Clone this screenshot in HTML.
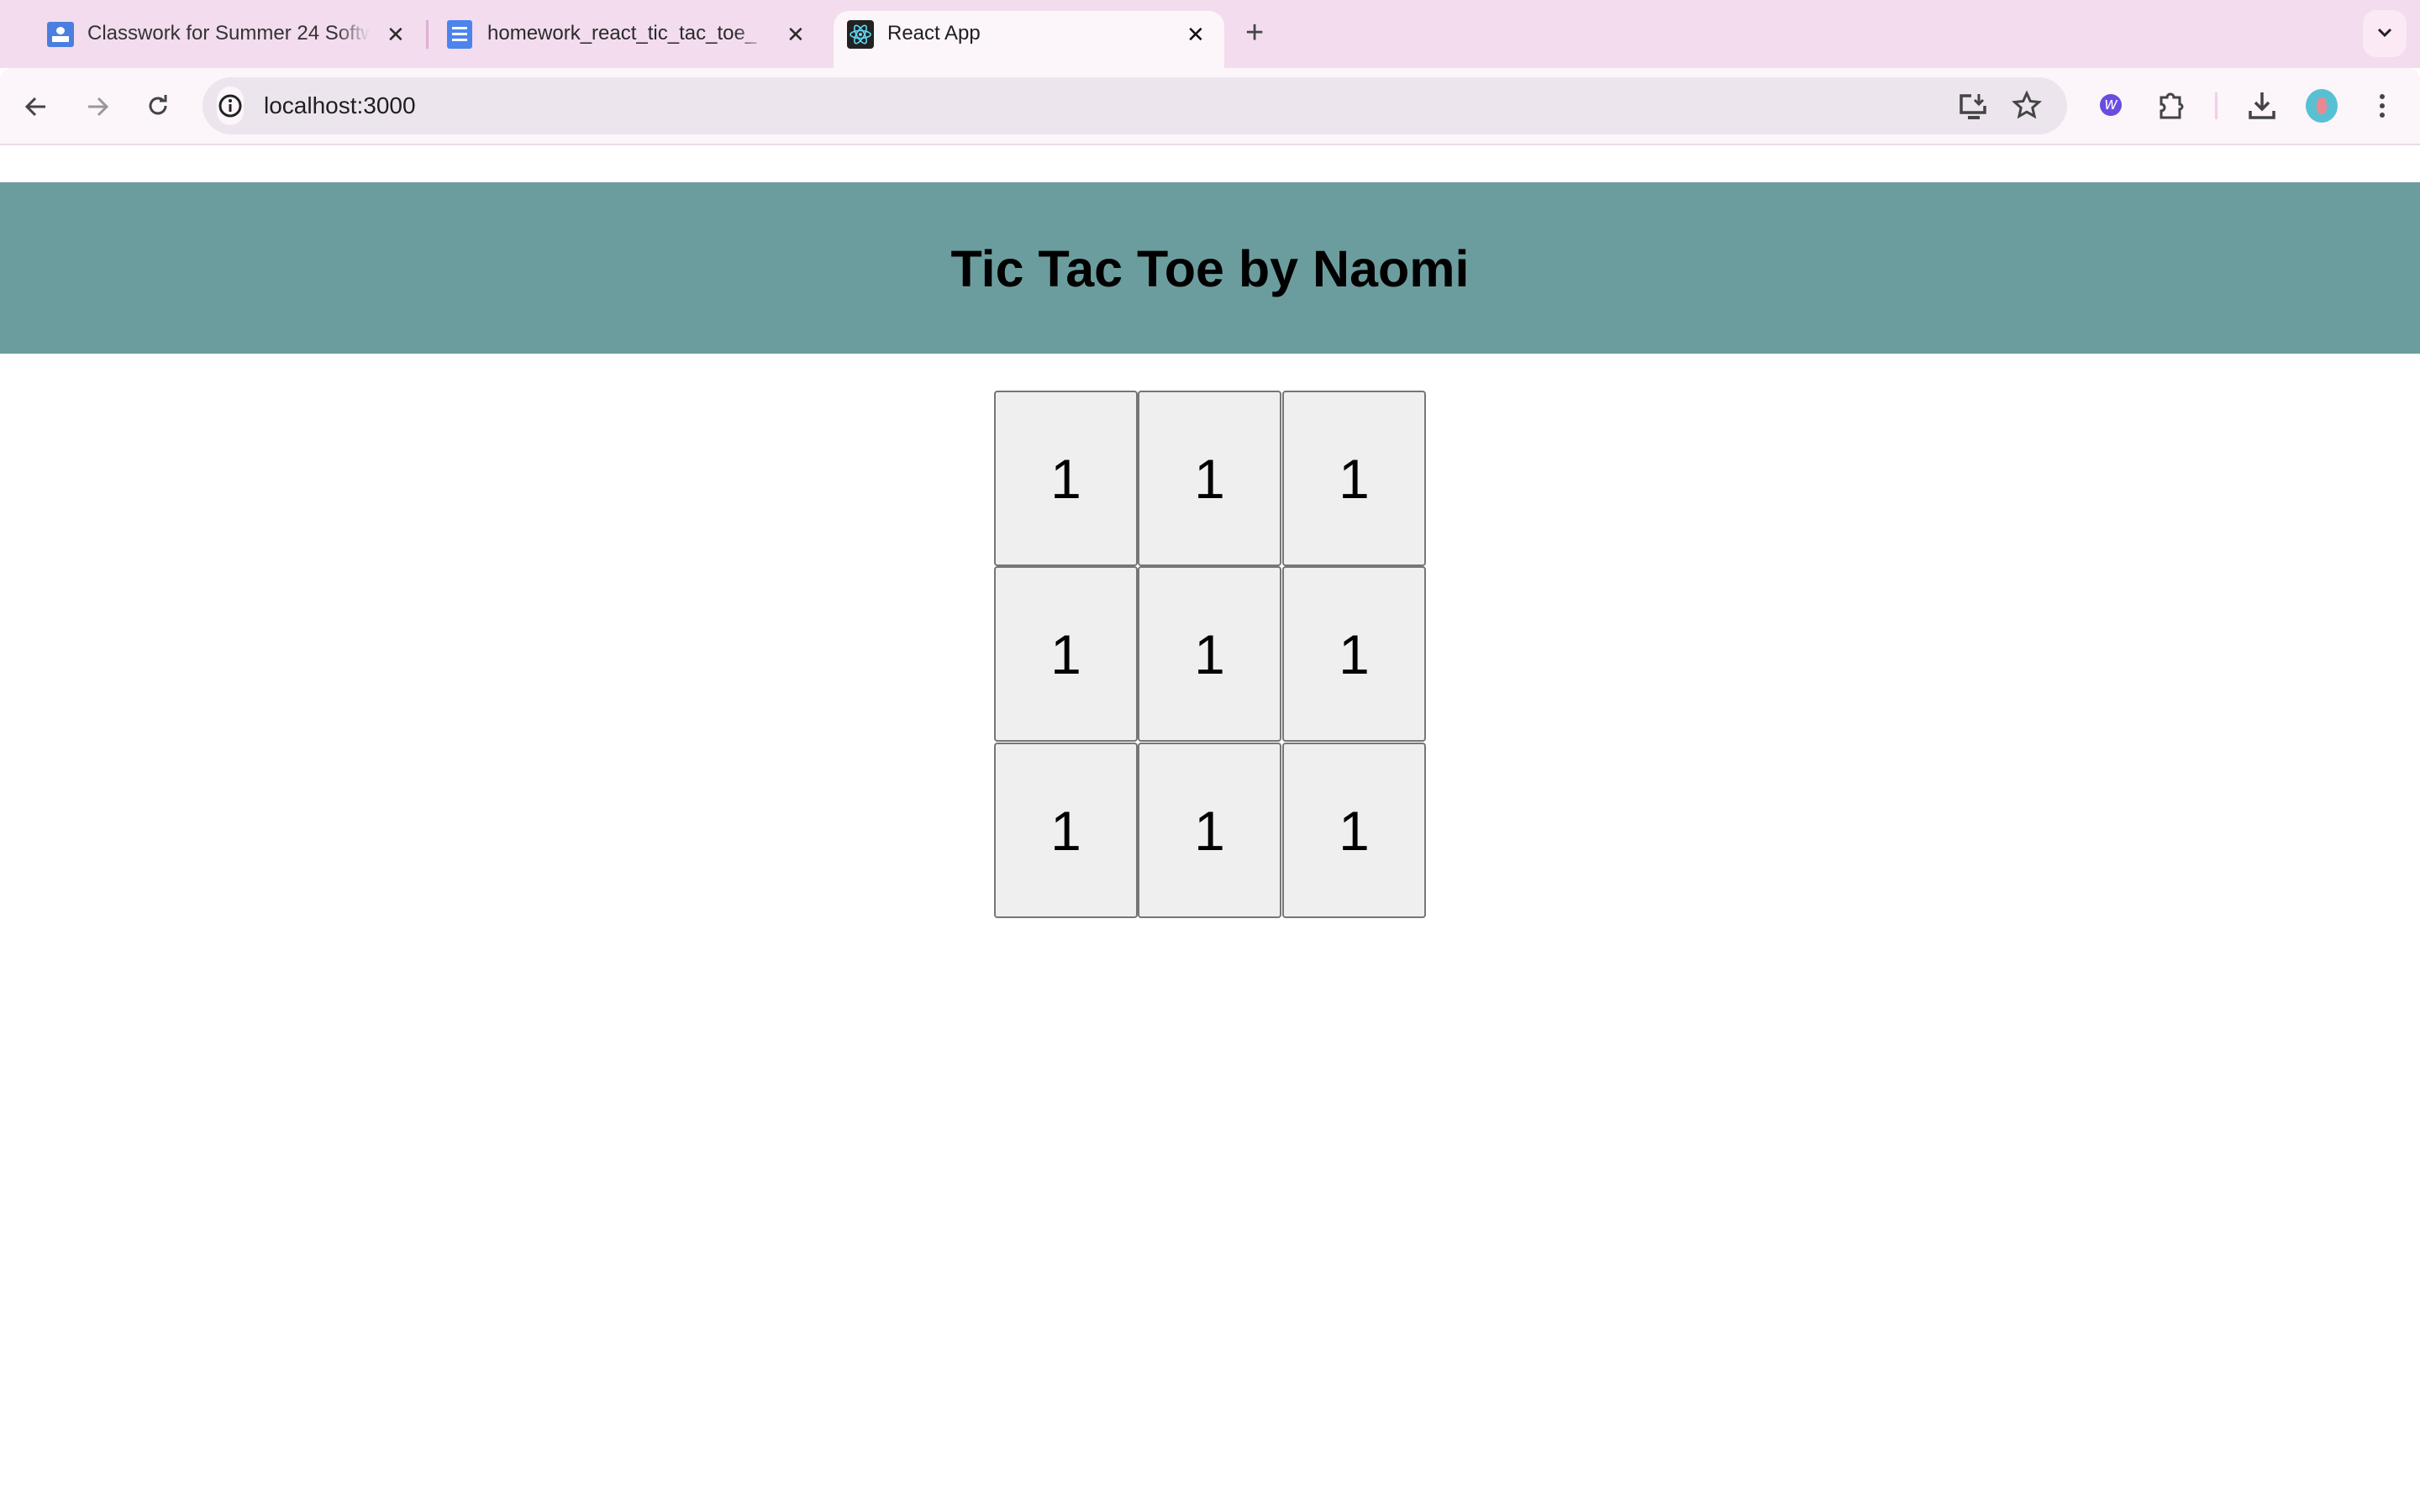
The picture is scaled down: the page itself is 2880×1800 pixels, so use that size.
<!DOCTYPE html>
<html><head><meta charset="utf-8"><style>
*{margin:0;padding:0;box-sizing:border-box}
body{width:2880px;height:1800px;background:#fff;position:relative;overflow:hidden;font-family:"Liberation Sans",Arial,sans-serif}
.a{position:absolute}
.tt{font-size:24px;color:#2a2a2a;top:26px;white-space:nowrap;overflow:hidden}
.fade{-webkit-mask-image:linear-gradient(to right,#000 88%,transparent);mask-image:linear-gradient(to right,#000 88%,transparent)}
svg{position:absolute}
.cell{position:absolute;width:171px;height:209px;background:#efefef;border:2px solid #767676;border-radius:4px;display:flex;align-items:center;justify-content:center;font-size:66px;color:#000}
</style></head><body>
<div class="a" style="left:0;top:0;width:2880px;height:81px;background:#f2dced"></div>
<div class="a" style="left:992px;top:13px;width:465px;height:75px;background:#fcf5f9;border-radius:18px 18px 0 0"></div>
<div class="a" style="left:0;top:81px;width:2880px;height:92px;background:#fcf5f9;border-radius:14px 14px 0 0;border-bottom:2px solid #eadbe7"></div>
<!-- tab 1 -->
<div class="a" style="left:56px;top:26px;width:32px;height:30px;background:#4a7fe0;border-radius:3px"></div>
<div class="a" style="left:67px;top:32px;width:10px;height:9px;background:#fff;border-radius:50%"></div>
<div class="a" style="left:62px;top:43px;width:20px;height:7px;background:#fff"></div>
<div class="a tt fade" style="left:104px;width:336px;color:#333">Classwork for Summer 24 Software</div>
<div class="a tt" style="left:460px;font-size:26px">✕</div>
<div class="a" style="left:507px;top:24px;width:3px;height:34px;background:#dfb0d6"></div>
<!-- tab 2 -->
<div class="a" style="left:532px;top:24px;width:30px;height:34px;background:#4c84ee;border-radius:3px"></div>
<div class="a" style="left:538px;top:32px;width:18px;height:3px;background:#fff;box-shadow:0 7px 0 #fff,0 14px 0 #fff"></div>
<div class="a tt fade" style="left:580px;width:334px">homework_react_tic_tac_toe_</div>
<div class="a tt" style="left:936px;font-size:26px">✕</div>
<!-- tab 3 -->
<div class="a" style="left:1008px;top:24px;width:32px;height:34px;background:#222;border-radius:4px"></div>
<svg style="left:1008px;top:24px" width="32" height="34" viewBox="0 0 32 34"><g fill="none" stroke="#61dafb" stroke-width="1.6"><ellipse cx="16" cy="17" rx="12" ry="4.5"/><ellipse cx="16" cy="17" rx="12" ry="4.5" transform="rotate(60 16 17)"/><ellipse cx="16" cy="17" rx="12" ry="4.5" transform="rotate(-60 16 17)"/></g><circle cx="16" cy="17" r="2" fill="#61dafb"/></svg>
<div class="a tt" style="left:1056px;color:#1f1f1f">React App</div>
<div class="a tt" style="left:1412px;font-size:26px;color:#111">✕</div>
<div class="a" style="left:1482px;top:18px;font-size:38px;color:#444">+</div>
<div class="a" style="left:2812px;top:12px;width:52px;height:56px;background:#fbe9f5;border-radius:16px"></div>
<svg style="left:2828px;top:32px" width="20" height="14"><path d="M3 3 L10 10 L17 3" fill="none" stroke="#222" stroke-width="3"/></svg>
<!-- toolbar -->
<svg style="left:28px;top:112px" width="30" height="30"><path d="M26 15H5M14 5L4 15l10 10" fill="none" stroke="#444" stroke-width="3"/></svg>
<svg style="left:101px;top:112px" width="30" height="30"><path d="M4 15h21M16 5l10 10-10 10" fill="none" stroke="#999" stroke-width="3"/></svg>
<svg style="left:172px;top:110px" width="32" height="32"><path d="M25 16a9 9 0 1 1-3-6.7" fill="none" stroke="#444" stroke-width="3"/><path d="M18 7h7V0" fill="none" stroke="#444" stroke-width="3" transform="translate(0,3)"/></svg>
<div class="a" style="left:241px;top:92px;width:2219px;height:68px;background:#ede5ee;border-radius:34px"></div>
<div class="a" style="left:258px;top:103px;width:32px;height:46px;background:#fcf5f9;border-radius:16px"></div>
<svg style="left:258px;top:110px" width="32" height="32"><circle cx="16" cy="16" r="12" fill="none" stroke="#222" stroke-width="3"/><path d="M16 14v9" stroke="#222" stroke-width="3"/><circle cx="16" cy="10" r="2" fill="#222"/></svg>
<div class="a" style="left:314px;top:110px;font-size:28px;color:#1f1f1f">localhost:3000</div>
<svg style="left:2330px;top:110px" width="36" height="34"><path d="M16 4H4v20h28V16" fill="none" stroke="#444" stroke-width="3.5"/><path d="M12 30h14" stroke="#444" stroke-width="4"/><path d="M25 2v11M20 9l5 5 5-5" fill="none" stroke="#444" stroke-width="3"/></svg>
<svg style="left:2394px;top:108px" width="36" height="36"><path d="M18 3l4.3 9.5 10.2 1-7.7 6.8 2.3 10.1L18 25.2 8.9 30.4l2.3-10.1L3.5 13.5l10.2-1z" fill="none" stroke="#444" stroke-width="3"/></svg>
<div class="a" style="left:2499px;top:112px;width:26px;height:26px;border-radius:50%;background:#6a4ce0;color:#fff;font-size:20px;text-align:center;line-height:24px;font-style:italic">w</div>
<svg style="left:2568px;top:108px" width="32" height="36"><path d="M4 8h7a4 4 0 0 1 8 0h7v8a3 3 0 0 1 0 6v10H4V24a3 3 0 0 0 0-8z" fill="none" stroke="#444" stroke-width="3"/></svg>
<div class="a" style="left:2636px;top:110px;width:3px;height:32px;background:#f3cde9"></div>
<svg style="left:2675px;top:108px" width="34" height="36"><path d="M17 2v20M9 14l8 8 8-8" fill="none" stroke="#444" stroke-width="3.5"/><path d="M3 24v8h28v-8" fill="none" stroke="#444" stroke-width="3.5"/></svg>
<div class="a" style="left:2744px;top:106px;width:38px;height:40px;border-radius:50%;background:#58c0d3"></div>
<div class="a" style="left:2757px;top:116px;width:12px;height:20px;background:#e88a90;border-radius:40%"></div>
<div class="a" style="left:2832px;top:112px;width:6px;height:6px;border-radius:50%;background:#444;box-shadow:0 11px 0 #444,0 22px 0 #444"></div>
<!-- page -->
<div class="a" style="left:0;top:217px;width:2880px;height:204px;background:#6c9d9e"></div>
<div class="a" style="left:0;top:282px;width:2880px;text-align:center;font-size:61px;font-weight:bold;color:#000;line-height:76px">Tic Tac Toe by Naomi</div>
<div class="cell" style="left:1183px;top:465px">1</div>
<div class="cell" style="left:1354px;top:465px">1</div>
<div class="cell" style="left:1526px;top:465px">1</div>
<div class="cell" style="left:1183px;top:674px">1</div>
<div class="cell" style="left:1354px;top:674px">1</div>
<div class="cell" style="left:1526px;top:674px">1</div>
<div class="cell" style="left:1183px;top:884px">1</div>
<div class="cell" style="left:1354px;top:884px">1</div>
<div class="cell" style="left:1526px;top:884px">1</div>
</body></html>
